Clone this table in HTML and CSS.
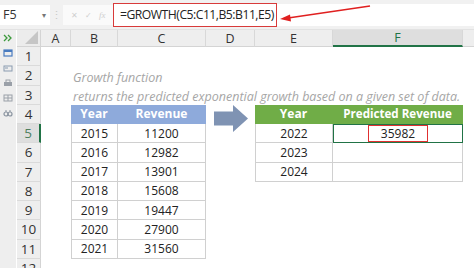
FILE: index.html
```html
<!DOCTYPE html>
<html>
<head>
<meta charset="utf-8">
<link rel="stylesheet" href="styles.css">
</head>
<body>
<div class="app">
  <div class="fbar">
    <div class="namebox"><span>F5</span><span class="dd">▾</span></div>
    <div class="grip">⋮</div>
    <div class="fxbox"><span>✕</span><span>✓</span><span class="fx">fx</span></div>
    <div class="formula">=GROWTH(C5:C11,B5:B11,E5)</div>
    <div class="fill"></div>
    <svg class="callout" width="100" height="24" viewBox="0 0 100 24">
      <line x1="92" y1="4" x2="10" y2="16" stroke="#e02020" stroke-width="1.6"/>
      <polygon points="2,17 12,12.5 13,19.5" fill="#e02020"/>
    </svg>
  </div>
  <div class="main">
    <div class="side">
      <svg width="10" height="10" viewBox="0 0 10 10"><path d="M1 2l3 3-3 3M5 2l3 3-3 3" fill="none" stroke="#3c9a3c" stroke-width="1.3"/></svg>
      <svg width="10" height="10" viewBox="0 0 10 10"><rect x="1" y="2" width="8" height="6" fill="none" stroke="#4a7cc0" stroke-width="1.2"/><rect x="1" y="2" width="8" height="2" fill="#4a7cc0"/></svg>
      <svg width="10" height="10" viewBox="0 0 10 10"><rect x="1" y="3" width="8" height="5" fill="none" stroke="#8a9bb0" stroke-width="1"/><path d="M2 5h3" stroke="#8a9bb0"/></svg>
      <svg width="10" height="10" viewBox="0 0 10 10"><rect x="1" y="4" width="8" height="4" fill="#9aa0a8"/><rect x="3" y="2" width="4" height="3" fill="none" stroke="#9aa0a8"/></svg>
      <svg width="10" height="10" viewBox="0 0 10 10"><rect x="1" y="2" width="8" height="6" fill="none" stroke="#9aa0a8"/><path d="M5 2v6M1 5h8" stroke="#9aa0a8"/></svg>
      <svg width="10" height="10" viewBox="0 0 10 10"><circle cx="3" cy="6" r="2" fill="none" stroke="#8a94a0" stroke-width="1.2"/><circle cx="7" cy="6" r="2" fill="none" stroke="#8a94a0" stroke-width="1.2"/><path d="M3 4V2M7 4V2" stroke="#8a94a0"/></svg>
    </div>
    <div class="sheet">
      <div class="corner"><span class="tri"></span></div>
      <div class="ch">A</div>
      <div class="ch">B</div>
      <div class="ch">C</div>
      <div class="ch">D</div>
      <div class="ch">E</div>
      <div class="ch sel">F</div>
      <div class="ch last"></div>

      <div class="rh r1">1</div>
      <div class="rh r2">2</div>
      <div class="rh r3">3</div>
      <div class="rh r4">4</div>
      <div class="rh r5 sel">5</div>
      <div class="rh r6">6</div>
      <div class="rh r7">7</div>
      <div class="rh r8">8</div>
      <div class="rh r9">9</div>
      <div class="rh r10">10</div>
      <div class="rh r11">11</div>
      <div class="rh r12">12</div>

      <div class="note n1">Growth function</div>
      <div class="note n2">returns the predicted exponential growth based on a given set of data.</div>

      <div class="lt hd cb r4">Year</div>
      <div class="lt hd cc r4">Revenue</div>
      <div class="lt cb r5 first">2015</div><div class="lt cc r5">11200</div>
      <div class="lt cb r6 first">2016</div><div class="lt cc r6">12982</div>
      <div class="lt cb r7 first">2017</div><div class="lt cc r7">13901</div>
      <div class="lt cb r8 first">2018</div><div class="lt cc r8">15608</div>
      <div class="lt cb r9 first">2019</div><div class="lt cc r9">19447</div>
      <div class="lt cb r10 first">2020</div><div class="lt cc r10">27900</div>
      <div class="lt cb r11 first">2021</div><div class="lt cc r11">31560</div>

      <div class="bigarrow">
        <svg width="34" height="27" viewBox="0 0 34 27"><polygon points="0,6.5 19,6.5 19,0 34,13.5 19,27 19,20.5 0,20.5" fill="#7f93b3"/></svg>
      </div>

      <div class="rt gh ce r4">Year</div>
      <div class="rt gh cf r4">Predicted Revenue</div>
      <div class="rt ce r5 first">2022</div><div class="rt cf r5 active"><span class="hit">35982</span></div>
      <div class="rt ce r6 first">2023</div><div class="rt cf r6"></div>
      <div class="rt ce r7 first">2024</div><div class="rt cf r7"></div>
    </div>
  </div>
</div>
</body>
</html>
```
FILE: styles.css
```css
* { box-sizing: border-box; }
html, body { margin: 0; padding: 0; background: #fff; }
body { width: 474px; height: 268px; overflow: hidden; font-family: "Open Sans", "Liberation Sans", sans-serif; color: #222; }
.app { display: flex; flex-direction: column; width: 474px; height: 268px; }

.fbar { position: relative; display: flex; align-items: center; height: 30px; background: #f1f1f1; padding: 3px 0 3px 0; border-bottom: 1px solid #e2e2e2; }
.namebox { width: 50px; height: 20px; background: #fff; display: flex; align-items: center; justify-content: space-between; padding: 0 4px 0 3px; font-size: 12.5px; color: #333; }
.namebox .dd { font-size: 8px; color: #777; }
.grip { width: 13px; text-align: center; color: #c8c8c8; font-size: 11px; }
.fxbox { width: 50px; height: 20px; background: #fafafa; display: flex; align-items: center; justify-content: space-around; color: #cfcfcf; font-size: 8px; padding: 0 4px; }
.fxbox .fx { font-style: italic; font-family: "Liberation Serif", serif; font-size: 9px; }
.formula { margin-left: 0; width: 164px; height: 24px; border: 1.5px solid #d83a3a; background: #fff; display: flex; align-items: center; padding: 0 4px 0 6px; font-size: 12.2px; color: #222; letter-spacing: -0.5px; white-space: nowrap; }
.fill { flex: 1; height: 22px; background: #fff; }
.callout { position: absolute; left: 278px; top: 2px; }

.main { flex: 1; display: flex; }
.side { width: 16px; background: #eeeeee; display: flex; flex-direction: column; align-items: center; gap: 5px; padding-top: 3px; margin-right: 1px; }
.side svg { display: block; }

.sheet { flex: 1; display: grid; grid-template-columns: 24px 30px 47px 88px 49px 78px 130px 1fr; grid-template-rows: 17px repeat(12, 19.25px); font-size: 12px; }
.corner { background: #ececec; border-right: 1px solid #d4d4d4; border-bottom: 1px solid #d4d4d4; position: relative; }
.tri { position: absolute; right: 2px; bottom: 2px; width: 0; height: 0; border-left: 13px solid transparent; border-bottom: 13px solid #c6c6c6; }
.ch { background: #eeeeee; border-right: 1px solid #d8d8d8; border-bottom: 1px solid #d4d4d4; display: flex; align-items: center; justify-content: center; color: #333; font-size: 12.5px; }
.ch.sel { background: #dedede; border-bottom: 2px solid #217346; color: #217346; }
.ch.last { border-right: none; }
.rh { grid-column: 1; background: #eeeeee; border-right: 1px solid #d4d4d4; border-bottom: 1px solid #dadada; display: flex; align-items: center; justify-content: center; color: #333; font-size: 13.5px; }
.rh.sel { background: #dedede; border-right: 2px solid #217346; color: #4f7f5f; }

.r1 { grid-row: 2; } .r2 { grid-row: 3; } .r3 { grid-row: 4; } .r4 { grid-row: 5; }
.r5 { grid-row: 6; } .r6 { grid-row: 7; } .r7 { grid-row: 8; } .r8 { grid-row: 9; }
.r9 { grid-row: 10; } .r10 { grid-row: 11; } .r11 { grid-row: 12; } .r12 { grid-row: 13; }

.note { grid-column: 3 / 9; font-style: italic; color: #a6a6a6; font-size: 12.5px; white-space: nowrap; display: flex; align-items: flex-end; padding-left: 2px; padding-bottom: 0; overflow: visible; }
.n1 { grid-row: 3; }
.n2 { grid-row: 4; }

.cb { grid-column: 3; }
.cc { grid-column: 4; }
.ce { grid-column: 6; }
.cf { grid-column: 7; }

.lt, .rt { display: flex; align-items: center; justify-content: center; font-size: 12px; color: #222; border-right: 1px solid #d0d0d0; border-bottom: 1px solid #d0d0d0; }
.first { border-left: 1px solid #d0d0d0; }
.hd { background: #8eaadb; color: #fff; font-weight: 700; border-color: #8eaadb; }
.gh { background: #70ad47; color: #fff; font-weight: 700; border-color: #70ad47; }
.gh.cf { font-size: 11.6px; }
.cf.active { border: 1.5px solid #217346; position: relative; }
.hit { display: flex; align-items: center; justify-content: center; width: 60px; height: 100%; border: 1.5px solid #e03030; }

.bigarrow { grid-column: 5; grid-row: 5 / 7; display: flex; align-items: flex-start; justify-content: center; }
.bigarrow svg { display: block; }
```
